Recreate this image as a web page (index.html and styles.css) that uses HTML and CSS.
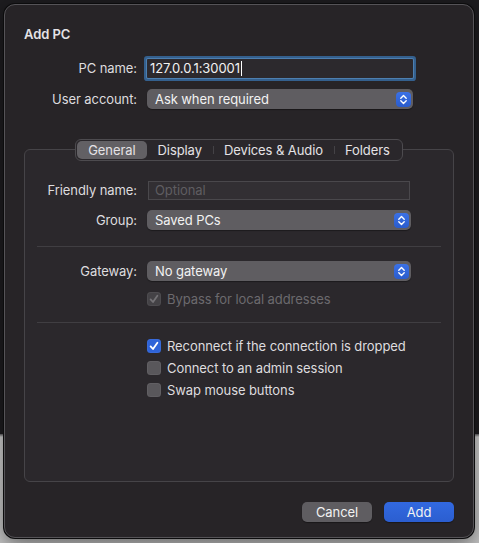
FILE: index.html
```html
<!DOCTYPE html>
<html lang="en">

<head>
    <meta charset="UTF-8">
    <meta name="viewport" content="width=device-width, initial-scale=1.0">
    <title>Add PC</title>
    <link rel="stylesheet" href="styles.css">
</head>

<body>
    <div class="dialog">
        <div class="title">Add PC</div>

        <div class="form top-form">
            <label class="label">PC name:</label>
            <div class="text-field focused"><span>127.0.0.1:30001</span><span class="caret"></span></div>

            <label class="label">User account:</label>
            <div class="popup">
                <span>Ask when required</span>
                <span class="popup-arrows">
                    <svg width="15" height="15" viewBox="0 0 15 15">
                        <path d="M4.8 6.2 L7.5 3.6 L10.2 6.2 M4.8 8.8 L7.5 11.4 L10.2 8.8" fill="none" stroke="#fff" stroke-width="1.4" stroke-linecap="round" stroke-linejoin="round" />
                    </svg>
                </span>
            </div>
        </div>

        <div class="tabs">
            <div class="tab selected">General</div>
            <div class="tab">Display</div>
            <div class="tab divided">Devices &amp; Audio</div>
            <div class="tab divided">Folders</div>
        </div>

        <div class="group-box">
            <div class="form box-form">
                <label class="label">Friendly name:</label>
                <input class="plain-field" type="text" placeholder="Optional">

                <label class="label">Group:</label>
                <div class="popup">
                    <span>Saved PCs</span>
                    <span class="popup-arrows">
                        <svg width="15" height="15" viewBox="0 0 15 15">
                            <path d="M4.8 6.2 L7.5 3.6 L10.2 6.2 M4.8 8.8 L7.5 11.4 L10.2 8.8" fill="none" stroke="#fff" stroke-width="1.4" stroke-linecap="round" stroke-linejoin="round" />
                        </svg>
                    </span>
                </div>
            </div>

            <div class="separator"></div>

            <div class="form box-form gateway-form">
                <label class="label">Gateway:</label>
                <div class="popup">
                    <span>No gateway</span>
                    <span class="popup-arrows">
                        <svg width="15" height="15" viewBox="0 0 15 15">
                            <path d="M4.8 6.2 L7.5 3.6 L10.2 6.2 M4.8 8.8 L7.5 11.4 L10.2 8.8" fill="none" stroke="#fff" stroke-width="1.4" stroke-linecap="round" stroke-linejoin="round" />
                        </svg>
                    </span>
                </div>

                <span></span>
                <div class="check disabled">
                    <span class="box checked">
                        <svg width="14" height="14" viewBox="0 0 14 14">
                            <path d="M3.6 7.4 L6 10 L10.4 3.8" fill="none" stroke="#747276" stroke-width="1.8" stroke-linecap="round" stroke-linejoin="round" />
                        </svg>
                    </span>
                    Bypass for local addresses
                </div>
            </div>

            <div class="separator"></div>

            <div class="checks">
                <div class="check">
                    <span class="box checked">
                        <svg width="14" height="14" viewBox="0 0 14 14">
                            <path d="M3.6 7.4 L6 10 L10.4 3.8" fill="none" stroke="#fff" stroke-width="1.8" stroke-linecap="round" stroke-linejoin="round" />
                        </svg>
                    </span>
                    Reconnect if the connection is dropped
                </div>
                <div class="check">
                    <span class="box"></span>
                    Connect to an admin session
                </div>
                <div class="check">
                    <span class="box"></span>
                    Swap mouse buttons
                </div>
            </div>
        </div>

        <div class="buttons">
            <button class="btn">Cancel</button>
            <button class="btn primary">Add</button>
        </div>
    </div>
</body>

</html>
```

FILE: styles.css
```css
:root {
    --dialog: #272427;
    --box: #2b282c;
    --line: #454347;
    --control: #5f5d61;
    --blue: #2e63d8;
    --text: #dedcdf;
    --bright: #f2f2f2;
    --dim: #6c6a6e;
}

body {
    margin: 0;
    height: 543px;
    overflow: hidden;
    background: linear-gradient(180deg, #1d1c1f 0, #1d1c1f 434px, #58575a 434px, #cfcfcf 437px, #c4c4c4 100%);
    font-family: Inter, "Liberation Sans", Arial, sans-serif;
    font-size: 13px;
    letter-spacing: -0.08px;
    color: var(--text);
}

.dialog {
    box-sizing: border-box;
    width: 470px;
    height: 534px;
    margin: 4px 0 0 4px;
    padding: 21px 19px 0;
    background: var(--dialog);
    border: 1px solid #555357;
    border-radius: 11px;
    box-shadow: 0 0 0 1px #0c0c0d, 0 6px 20px rgba(0, 0, 0, 0.5);
}

.title {
    font-weight: 600;
    line-height: 16px;
    color: #e4e2e5;
}

.form {
    display: grid;
    grid-template-columns: 113px 266px;
    grid-auto-rows: 20px;
    column-gap: 10px;
    row-gap: 11px;
    align-items: center;
}

.top-form {
    margin-top: 16px;
}

.label {
    text-align: right;
    white-space: nowrap;
}

.text-field {
    height: 19px;
    display: flex;
    align-items: center;
    padding-left: 3px;
    background: #2c292d;
    color: var(--bright);
    box-shadow: 0 0 0 1px #4d7fb0, 0 0 0 3px #34608e;
    border-radius: 1px;
}

.caret {
    width: 1px;
    height: 15px;
    margin-left: 1px;
    background: #fff;
}

.popup {
    height: 20px;
    display: flex;
    align-items: center;
    justify-content: space-between;
    padding: 0 2px 0 8px;
    background: var(--control);
    border-radius: 5px;
    color: var(--bright);
    box-shadow: 0 1px 1px rgba(0, 0, 0, 0.35);
}

.popup-arrows {
    width: 15px;
    height: 15px;
    display: flex;
    background: linear-gradient(180deg, #3b71e6, #2a5ccc);
    border-radius: 4px;
}

.tabs {
    position: relative;
    z-index: 1;
    display: flex;
    width: max-content;
    height: 22px;
    box-sizing: border-box;
    margin: 30px auto -12px;
    padding: 1px;
    background: #2a272b;
    border: 1px solid #4d4b4f;
    border-radius: 6px;
}

.tab {
    display: flex;
    align-items: center;
    padding: 0 11px;
    border-radius: 5px;
    color: #e4e2e5;
    position: relative;
}

.tab.selected {
    background: #626064;
}

.tab.divided::before {
    content: "";
    position: absolute;
    left: 0;
    top: 5px;
    bottom: 5px;
    width: 1px;
    background: #444246;
}

.group-box {
    box-sizing: border-box;
    height: 333px;
    padding-top: 30px;
    background: var(--box);
    border: 1px solid #464448;
    border-radius: 6px;
}

.box-form {
    grid-template-columns: 112px 264px;
    row-gap: 10px;
}

.plain-field {
    box-sizing: border-box;
    width: 262px;
    height: 19px;
    margin: 0 0 0 1px;
    padding: 0 6px;
    background: #322f33;
    border: 1px solid #4a484c;
    border-radius: 0;
    font-family: inherit;
    font-size: 13px;
    letter-spacing: inherit;
    color: var(--bright);
    outline: none;
}

.plain-field::placeholder {
    color: #5f5d61;
}

.separator {
    height: 1px;
    margin: 16px 12px 14px;
    background: #403e42;
}

.gateway-form {
    grid-template-rows: 20px 14px;
    row-gap: 11px;
}

.gateway-form + .separator {
    margin-top: 16px;
    margin-bottom: 16px;
}

.check {
    display: flex;
    align-items: center;
    gap: 6px;
    height: 14px;
    color: var(--text);
    white-space: nowrap;
}

.check.disabled {
    color: var(--dim);
}

.box {
    width: 14px;
    height: 14px;
    display: flex;
    border-radius: 3.5px;
    background: #59575b;
    box-shadow: inset 0 0 0 1px rgba(255, 255, 255, 0.05);
}

.box.checked {
    background: var(--blue);
}

.check.disabled .box.checked {
    background: #444246;
}

.checks {
    display: flex;
    flex-direction: column;
    gap: 8px;
    padding-left: 122px;
}

.buttons {
    display: flex;
    justify-content: flex-end;
    gap: 12px;
    margin-top: 20px;
}

.btn {
    width: 70px;
    height: 20px;
    padding: 0;
    border: none;
    border-radius: 5px;
    background: var(--control);
    color: var(--bright);
    font-family: inherit;
    font-size: 13px;
    letter-spacing: inherit;
    box-shadow: 0 1px 1px rgba(0, 0, 0, 0.35);
}

.btn.primary {
    background: linear-gradient(180deg, #3269e0, #2b5ed0);
}
```
